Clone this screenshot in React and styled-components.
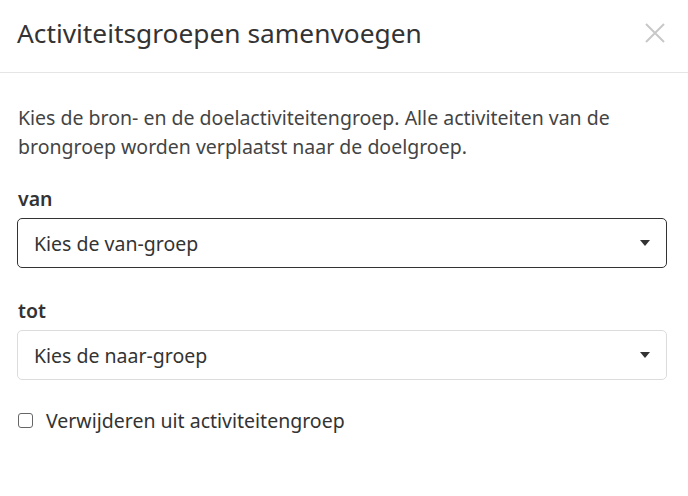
import React from "react";
import styled, { createGlobalStyle } from "styled-components";

const Global = createGlobalStyle`
  html, body { margin: 0; padding: 0; background: #fff; }
  body { font-family: "Noto Sans", "Open Sans", sans-serif; color: #333; }
  * { box-sizing: border-box; }
`;

const Dialog = styled.div`
  width: 688px;
  height: 496px;
  background: #fff;
  display: flex;
  flex-direction: column;
`;

const Header = styled.header`
  height: 73px;
  border-bottom: 1px solid #e5e5e5;
  display: flex;
  align-items: center;
  justify-content: space-between;
  padding: 0 22px 7px 17px;
`;

const Title = styled.h1`
  margin: 0;
  font-size: 26.3px;
  line-height: 36px;
  font-weight: 400;
  color: #333;
`;

const Close = styled.button`
  border: 0;
  background: none;
  padding: 0;
  width: 22px;
  height: 22px;
  display: flex;
  align-items: center;
  justify-content: center;
  cursor: pointer;
`;

const Body = styled.div`
  padding: 30px 21px 0 17px;
  display: flex;
  flex-direction: column;
`;

const Intro = styled.p`
  margin: 0 0 24px 1px;
  font-size: 19.5px;
  line-height: 29px;
  color: #444;
`;

const Group = styled.div`
  display: flex;
  flex-direction: column;
  margin-bottom: ${(p) => p.$mb}px;
`;

const Label = styled.label`
  font-size: 19.5px;
  font-weight: 600;
  line-height: 27px;
  color: #333;
  margin: 0 0 6px 1px;
`;

const Select = styled.div`
  height: 50px;
  border: 1px solid ${(p) => (p.$focused ? "#333" : "#dcdcdc")};
  border-radius: 5px;
  display: flex;
  align-items: center;
  justify-content: space-between;
  padding: 0 16px 0 16px;
  font-size: 19.5px;
  color: #333;
`;

const Caret = styled.span`
  width: 0;
  height: 0;
  border-left: 5px solid transparent;
  border-right: 5px solid transparent;
  border-top: 6px solid #333;
`;

const CheckRow = styled.label`
  display: flex;
  align-items: center;
  gap: 13px;
  font-size: 19.5px;
  line-height: 27px;
  color: #333;
`;

const Box = styled.span`
  width: 15px;
  height: 15px;
  border: 1px solid #666;
  border-radius: 3px;
  background: #fff;
  margin-left: 1px;
`;

export default function App() {
  return (
    <>
      <Global />
      <Dialog>
        <Header>
          <Title>Activiteitsgroepen samenvoegen</Title>
          <Close aria-label="Sluiten">
            <svg width="20" height="20" viewBox="0 0 20 20">
              <path d="M1 1 L19 19 M19 1 L1 19" stroke="#c8c8c8" strokeWidth="2" fill="none" />
            </svg>
          </Close>
        </Header>
        <Body>
          <Intro>
            Kies de bron- en de doelactiviteitengroep. Alle activiteiten van de brongroep worden verplaatst naar de doelgroep.
          </Intro>
          <Group $mb={29}>
            <Label>van</Label>
            <Select $focused>
              <span>Kies de van-groep</span>
              <Caret />
            </Select>
          </Group>
          <Group $mb={27}>
            <Label>tot</Label>
            <Select>
              <span>Kies de naar-groep</span>
              <Caret />
            </Select>
          </Group>
          <CheckRow>
            <Box />
            <span>Verwijderen uit activiteitengroep</span>
          </CheckRow>
        </Body>
      </Dialog>
    </>
  );
}
